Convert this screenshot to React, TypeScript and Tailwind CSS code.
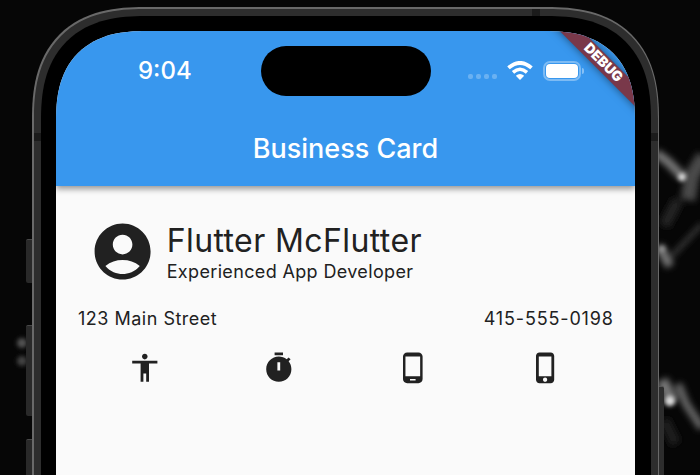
import React from "react";

function Icon({ d, size }: { d: string; size: number }) {
  return (
    <svg width={size} height={size} viewBox="0 0 24 24" fill="#212121" className="block shrink-0">
      <path d={d} />
    </svg>
  );
}

const ACCOUNT =
  "M12 2C6.48 2 2 6.48 2 12s4.48 10 10 10 10-4.48 10-10S17.52 2 12 2zm0 4c1.93 0 3.5 1.57 3.5 3.5S13.93 13 12 13s-3.5-1.57-3.5-3.5S10.07 6 12 6zm0 14c-2.03 0-4.43-.82-6.14-2.88a9.947 9.947 0 0 1 12.28 0C16.43 19.18 14.03 20 12 20z";
const CONTACT_ICONS = [
  "M12 2c1.1 0 2 .9 2 2s-.9 2-2 2-2-.9-2-2 .9-2 2-2zm9 7h-6v13h-2v-6h-2v6H9V9H3V7h18v2z",
  "M15 1H9v2h6V1zM19.03 7.39l1.42-1.42c-.43-.51-.9-.99-1.41-1.41l-1.42 1.42C16.07 4.74 14.12 4 12 4c-4.97 0-9 4.03-9 9s4.02 9 9 9 9-4.03 9-9c0-2.12-.74-4.07-1.97-5.61zM13 14h-2V8h2v6z",
  "M16 1H8C6.34 1 5 2.34 5 4v16c0 1.66 1.34 3 3 3h8c1.66 0 3-1.34 3-3V4c0-1.66-1.34-3-3-3zm-2 20h-4v-1h4v1zm3.25-3H6.75V4h10.5v14z",
  "M15.5 1h-8C6.12 1 5 2.12 5 3.5v17C5 21.88 6.12 23 7.5 23h8c1.38 0 2.5-1.12 2.5-2.5v-17C18 2.12 16.88 1 15.5 1zm-4 21c-.83 0-1.5-.67-1.5-1.5s.67-1.5 1.5-1.5 1.5.67 1.5 1.5-.67 1.5-1.5 1.5zm4.5-4H7V4h9v14z",
];

function Wallpaper() {
  return (
    <svg className="absolute inset-0" width="700" height="475" viewBox="0 0 700 475">
      <defs>
        <filter id="soft" x="-50%" y="-50%" width="200%" height="200%">
          <feGaussianBlur stdDeviation="3.2" />
        </filter>
        <filter id="glow" x="-100%" y="-100%" width="300%" height="300%">
          <feGaussianBlur stdDeviation="2.2" />
        </filter>
      </defs>
      <rect width="700" height="475" fill="#060606" />
      <g fill="none" stroke="#777" filter="url(#soft)">
        <path d="M656 153 L668 162 L682 176" strokeWidth="9" />
        <path d="M704 156 L692 176 L688 200" strokeWidth="15" stroke="#4a4a4a" />
        <path d="M678 200 L664 226" strokeWidth="12" stroke="#242424" />
        <path d="M702 224 L672 256" strokeWidth="4" stroke="#444" />
        <path d="M659 246 L670 266" strokeWidth="9" />
        <path d="M662 380 L672 402" strokeWidth="12" />
        <path d="M678 384 L686 404 L702 428" strokeWidth="8" stroke="#666" />
        <path d="M664 420 L676 444" strokeWidth="12" stroke="#1c1c1c" />
      </g>
      <g fill="#ddd" filter="url(#glow)">
        <circle cx="682" cy="177" r="4" />
        <circle cx="670" cy="401" r="5" />
        <circle cx="662" cy="249" r="3" fill="#999" />
        <circle cx="22" cy="343" r="5" fill="#555" />
        <circle cx="22" cy="361" r="5" fill="#444" />
      </g>
    </svg>
  );
}

function StatusIcons() {
  return (
    <div className="ml-auto flex items-center">
      <div className="mt-[12px] flex gap-[3px]">
        <i className="size-[5px] rounded-[2px] bg-white/25" />
        <i className="size-[5px] rounded-[2px] bg-white/25" />
        <i className="size-[5px] rounded-[2px] bg-white/25" />
        <i className="size-[5px] rounded-[2px] bg-white/25" />
      </div>
      <svg className="ml-[10px]" width="26" height="19" viewBox="0 0 26 19" fill="none" stroke="white" strokeWidth="3.8">
        <path d="M1.5 6.9 Q13 -3.1 24.500 6.900" />
        <path d="M6 11.400 Q13 5.100 20 11.400" strokeWidth="3.500" />
        <path d="M8.8 14.800 Q13 11.400 17.200 14.800 L13 19 Z" fill="white" stroke="none" />
      </svg>
      <div className="ml-[10px] h-[20px] w-[38px] rounded-[7px] border-2 border-white/35 p-px">
        <div className="h-full w-full rounded-[4px] bg-white" />
      </div>
      <i className="ml-[1px] h-[6px] w-[2px] rounded-r-full bg-white/40" />
    </div>
  );
}

export default function App() {
  return (
    <div className="relative h-[475px] w-[700px] overflow-hidden bg-black font-['Inter',sans-serif] text-[#212121]">
      <Wallpaper />

      {/* Side buttons sit behind the phone body */}
      <i className="absolute left-[26px] top-[239px] h-[44px] w-[8px] rounded-l-[2px] border-t border-[#484848] bg-[#292929]" />
      <i className="absolute left-[26px] top-[325px] h-[91px] w-[8px] rounded-l-[2px] border-t border-[#484848] bg-[#292929]" />
      <i className="absolute left-[26px] top-[439px] h-[50px] w-[8px] rounded-l-[2px] border-t border-[#484848] bg-[#292929]" />
      <i className="absolute left-[657px] top-[386px] h-[100px] w-[7px] rounded-r-[2px] border-t border-[#555] bg-[#2d2d2d]" />

      <div className="relative ml-[32px] mt-[7px] h-[600px] w-[627px] rounded-t-[93px] bg-[#696969] p-[1.5px] supports-[corner-shape:squircle]:rounded-t-[112px] supports-[corner-shape:squircle]:[corner-shape:superellipse(1.3)]">
        <div className="relative h-full rounded-t-[91px] bg-[#2d2d2d] p-[7px] supports-[corner-shape:squircle]:rounded-t-[110px] supports-[corner-shape:squircle]:[corner-shape:superellipse(1.3)]">
          <i className="absolute left-0 top-[124px] h-[8px] w-[8px] bg-[#1b1b1b]" />
          <i className="absolute right-0 top-[124px] h-[8px] w-[8px] bg-[#1b1b1b]" />
          <i className="absolute left-[498px] top-0 h-[8px] w-[8px] bg-[#1b1b1b]" />
          <div className="relative h-full rounded-t-[85px] bg-black px-[15.500px] pt-[15.500px] supports-[corner-shape:squircle]:rounded-t-[104px] supports-[corner-shape:squircle]:[corner-shape:superellipse(1.3)]">
            <div className="relative h-full overflow-hidden rounded-t-[74px] bg-[#fafafa] supports-[corner-shape:squircle]:rounded-t-[90px] supports-[corner-shape:squircle]:[corner-shape:superellipse(1.3)]">
              <header className="relative h-[154.500px] bg-[#3897ee] text-white shadow-[0_3px_6px_rgba(0,0,0,0.4)]">
                <div className="flex h-[79px] items-center pl-[82px] pr-[51px]">
                  <span className="text-[24px] font-medium leading-none">9:04</span>
                  <StatusIcons />
                </div>
                <div className="absolute left-[205px] top-[15px] h-[50px] w-[170px] rounded-full bg-black" />
                <h1 className="mt-[23px] text-center text-[27px] font-medium leading-[32px]">Business Card</h1>
                <div className="absolute left-[477px] top-[24px] flex h-[16px] w-[140px] rotate-45 items-center justify-center bg-[#79384a] shadow-[0_0_9px_rgba(0,0,0,0.5)]">
                  <span className="text-[13.800px] font-black leading-none">DEBUG</span>
                </div>
              </header>

              <main className="px-[22px] pt-[32.500px]">
                <div className="flex items-center pl-[10.500px]">
                  <Icon d={ACCOUNT} size={67.2} />
                  <div className="ml-[11px] mt-[2px]">
                    <div className="text-[32px] leading-[38px] tracking-[0.400px]">Flutter McFlutter</div>
                    <div className="mt-px text-[18px] leading-[22px] tracking-[0.350px]">Experienced App Developer</div>
                  </div>
                </div>
                <div className="mt-[21.500px] flex justify-between text-[18px] leading-[24px]">
                  <span className="tracking-[0.500px]">123 Main Street</span>
                  <span className="-mr-[0.8px] tracking-[0.850px]">415-555-0198</span>
                </div>
                <div className="mt-[20.500px] flex justify-around">
                  {CONTACT_ICONS.map((d) => (
                    <Icon key={d} d={d} size={33.6} />
                  ))}
                </div>
              </main>
            </div>
          </div>
        </div>
      </div>
    </div>
  );
}
